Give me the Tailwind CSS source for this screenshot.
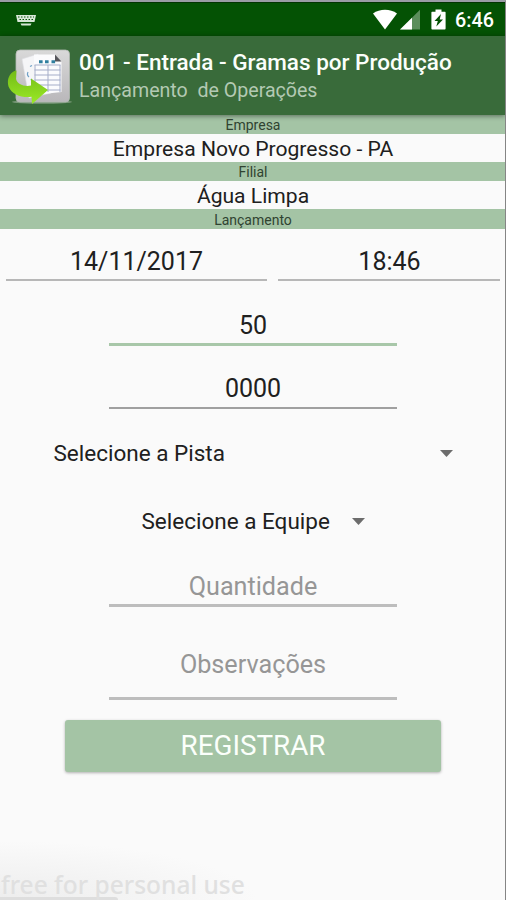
<!DOCTYPE html>
<html lang="pt-BR">
<head>
    <meta charset="UTF-8">
    <meta name="viewport" content="width=device-width, initial-scale=1.0">
    <title>Lançamento de Operações</title>
    <script src="https://cdn.jsdelivr.net/npm/@tailwindcss/browser@4"></script>
</head>
<body class="bg-[#fafafa] font-[Roboto,sans-serif] text-[#202020]">
    <div class="relative flex h-[900px] w-[506px] flex-col overflow-hidden border-t-2 border-r border-t-[#9b9da6] border-r-[#858585]">

        <!-- Status bar -->
        <div class="flex h-[34px] shrink-0 items-center border-t border-[#033503] bg-[#045204] pr-[10px] pl-4 text-white">
            <svg class="h-[12px] w-[20px]" viewBox="0 0 20 12" fill="#d9e8d9">
                <path fill-rule="evenodd" d="M0 1h20l-1.500 7h-17zM2 2.500v1h1.500v-1zM5 2.500v1h1.500v-1zM8 2.500v1h1.500v-1zM11 2.500v1h1.500v-1zM14 2.500v1h1.500v-1zM17 2.500v1h1v-1zM3.500 5v1h1.500v-1zM6.500 5v1h1.500v-1zM9.500 5v1h1.500v-1zM12.500 5v1h1.500v-1zM15.500 5v1h1.500v-1z"/>
                <path d="M4.500 9.500h11l-1 1.900h-9z"/>
            </svg>
            <svg class="ml-auto h-[21px] w-[26px]" viewBox="0 0 26 21" fill="#fff">
                <path d="M13 20.500 1 4.600C4.500 2 8.500.8 13 .8s8.500 1.200 12 3.800z"/>
            </svg>
            <svg class="ml-[2px] h-[21px] w-[20px]" viewBox="0 0 20 21">
                <path d="M0 20.500 20 .8v19.700z" fill="#fff" fill-opacity=".35"/>
                <path d="M0 20.500 12 8.700v11.800z" fill="#fff"/>
            </svg>
            <svg class="ml-[11px] h-[21px] w-[15px]" viewBox="0 0 15 21">
                <path d="M1 2.700h3.500V.5h6v2.200H14q.6 0 .6.800v16q0 1-.8 1H1.200q-.8 0-.8-1v-16q0-.8.6-.8z" fill="#fff"/>
                <path d="M10 5 3.500 12h3.300l-1.500 5.500L12 10.600H8.700z" fill="#045204"/>
            </svg>
            <span class="mt-[2px] ml-[9px] w-[40px] text-[19.800px] leading-none font-medium whitespace-nowrap">6:46</span>
        </div>

        <!-- Action bar -->
        <div class="relative z-10 flex h-[79px] shrink-0 items-center bg-[#396b3a] pl-[7px] shadow-[0_1px_5px_rgba(0,0,0,0.45)]">
            <svg class="h-[60px] w-[66px] shrink-0" viewBox="0 0 66 60">
                <defs>
                    <linearGradient id="tile" x1="0" y1="0" x2="0" y2="1">
                        <stop offset="0" stop-color="#d9d9d9"/>
                        <stop offset="1" stop-color="#b9b7ba"/>
                    </linearGradient>
                    <linearGradient id="arrow" x1="0" y1="0" x2="0" y2="1">
                        <stop offset="0" stop-color="#73bb16"/>
                        <stop offset="1" stop-color="#9bea26"/>
                    </linearGradient>
                </defs>
                <ellipse cx="35" cy="56" rx="30" ry="1.800" fill="#8ca58b" opacity=".8"/>
                <rect x="9" y="4" width="53.500" height="52" rx="4" fill="url(#tile)" stroke="#b4bab4" stroke-width=".8"/>
                <path d="M15 13 31 8l13 39-22 5z" fill="#f5f5f7" stroke="#dedee2" stroke-width=".6"/>
                <path d="M27 8.500h21l6.500 7V46L27 49z" fill="#fbfbfd"/>
                <path d="M48 8.500 54.500 15.500H48z" fill="#56565b"/>
                <path d="M27.500 19h26M27.500 24h26M27.500 29h26M27.500 34h26M27.500 39h26M27.500 44h26M28 19v27M41 19v27M53 19v27" stroke="#a5adc8" stroke-width="1" fill="none"/>
                <path d="M32 14.200h3.600v3H32zM38 14.200h3.600v3H38zM44.500 14.200h3.600v3h-3.600z" fill="#2f7f9f"/>
                <path d="M23 20.500l2-1M21 26q-1.500 3 1 5M24 33l1 3" stroke="#6fa0c6" stroke-width="1.200" fill="none"/>
                <path d="M9.500 24.500C2.500 25.500-.5 34 1.500 40.500 5 49 15 52 24.500 50.800L25 58 41 44 24 32.500v7C17 41 10 38 9 33z" fill="url(#arrow)"/>
            </svg>
            <div class="ml-[6px] whitespace-nowrap">
                <h1 class="text-[22.500px] leading-[30px] font-medium text-[#fbfffb]">001 - Entrada - Gramas por Produção</h1>
                <p class="pt-[1px] text-[19.600px] leading-[26px] text-[#b3c9b3]">Lançamento&nbsp; de Operações</p>
            </div>
        </div>

        <!-- Empresa / Filial / Lançamento -->
        <div class="shrink-0 text-center">
            <div class="h-[19px] bg-[#a4c4a5] pt-[1px] pl-[1px] text-[14px] leading-[19px] text-[#304331]">Empresa</div>
            <div class="h-[28px] pl-[1px] text-[21.100px] leading-[30px]">Empresa Novo Progresso - PA</div>
            <div class="h-[19px] bg-[#a4c4a5] pt-[1px] pl-[1px] text-[14px] leading-[19px] text-[#304331]">Filial</div>
            <div class="h-[28px] pl-[1px] text-[21.100px] leading-[30px]">Água Limpa</div>
            <div class="h-[20px] bg-[#a4c4a5] pt-[1px] pl-[1px] text-[14px] leading-[20px] text-[#304331]">Lançamento</div>
        </div>

        <!-- Form -->
        <form class="flex shrink-0 flex-col items-center">
            <div class="flex gap-[11px] self-stretch pr-[5px] pl-[6px] text-center text-[25px] leading-[30px]">
                <div class="h-[52px] w-[261px] border-b-2 border-[#b7b7b7] pt-[18px]">14/11/2017</div>
                <div class="h-[52px] flex-1 border-b-2 border-[#b7b7b7] pt-[18px] pl-[1px]">18:46</div>
            </div>
            <div class="mt-[29px] h-[36px] w-[288px] border-b-[3px] border-[#a8c7a9] pl-[1px] text-center text-[25px] leading-[31px]">50</div>
            <div class="mt-[27px] h-[36px] w-[288px] border-b-2 border-[#a0a0a0] pl-[1px] text-center text-[25px] leading-[31px]">0000</div>
            <div class="mt-[29px] ml-[1px] flex h-[30px] w-[399px] items-center justify-between text-[22.500px] leading-[30px]">
                <span>Selecione a Pista</span>
                <svg class="h-[7px] w-[13px]" viewBox="0 0 13 7" fill="#6c6c6c"><path d="M0 0h13L6.500 7z"/></svg>
            </div>
            <div class="mt-[38px] ml-[1px] flex h-[30px] w-[223px] items-center justify-between text-[22.500px] leading-[30px]">
                <span>Selecione a Equipe</span>
                <svg class="h-[7px] w-[13px]" viewBox="0 0 13 7" fill="#6c6c6c"><path d="M0 0h13L6.500 7z"/></svg>
            </div>
            <div class="mt-[36px] h-[35px] w-[288px] border-b-[3px] border-[#bdbdbd] pl-[1px] text-center text-[25.200px] leading-[30px] text-[#969696]">Quantidade</div>
            <div class="mt-[42px] h-[51px] w-[288px] border-b-[3px] border-[#bdbdbd] pl-[1px] text-center text-[25.200px] leading-[31px] text-[#969696]">Observações</div>
            <button type="button" class="mt-[20px] h-[52px] w-[376px] rounded-[3px] bg-[#a4c4a5] pl-[1px] text-[27.800px] leading-[52px] text-[#fbfffb] shadow-[0_1px_3px_rgba(0,0,0,0.3)]">REGISTRAR</button>
        </form>

        <!-- Watermark -->
        <div class="absolute bottom-0 left-0 h-[60px] w-[260px] bg-[radial-gradient(ellipse_at_bottom_left,#ededed,#fafafa_70%)]">
            <div class="absolute bottom-0 left-0 h-[3px] w-[118px] rounded-tr-lg bg-[#dedede]"></div>
            <p class="absolute top-[30px] left-[1px] font-['Noto_Sans',sans-serif] text-[24.500px] leading-[30px] font-medium whitespace-nowrap text-[#e0e0e0]">free for personal use</p>
        </div>
    </div>
</body>
</html>
